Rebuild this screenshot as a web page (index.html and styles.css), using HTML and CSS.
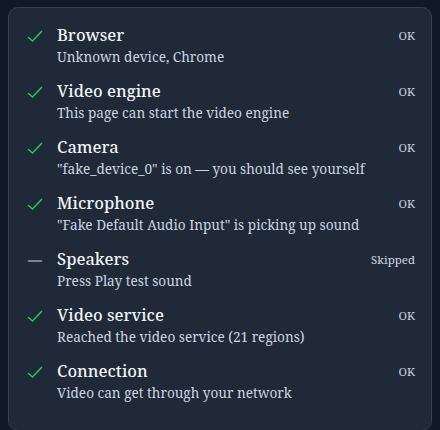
FILE: index.html
```html
<!DOCTYPE html>
<html lang="en">
<head>
    <meta charset="UTF-8">
    <meta name="viewport" content="width=device-width, initial-scale=1.0">
    <title>Device check</title>
    <link rel="stylesheet" href="styles.css">
</head>
<body>

    <div class="card">
        <div class="check">
            <svg class="icon ok" viewBox="0 0 16 16"><path d="M1.5 8.5 L5.5 12 L14.5 2.5"/></svg>
            <div class="info">
                <div class="name">Browser</div>
                <div class="detail">Unknown device, Chrome</div>
            </div>
            <div class="status">OK</div>
        </div>
        <div class="check">
            <svg class="icon ok" viewBox="0 0 16 16"><path d="M1.5 8.5 L5.5 12 L14.5 2.5"/></svg>
            <div class="info">
                <div class="name">Video engine</div>
                <div class="detail">This page can start the video engine</div>
            </div>
            <div class="status">OK</div>
        </div>
        <div class="check">
            <svg class="icon ok" viewBox="0 0 16 16"><path d="M1.5 8.5 L5.5 12 L14.5 2.5"/></svg>
            <div class="info">
                <div class="name">Camera</div>
                <div class="detail">"fake_device_0" is on — you should see yourself</div>
            </div>
            <div class="status">OK</div>
        </div>
        <div class="check">
            <svg class="icon ok" viewBox="0 0 16 16"><path d="M1.5 8.5 L5.5 12 L14.5 2.5"/></svg>
            <div class="info">
                <div class="name">Microphone</div>
                <div class="detail">"Fake Default Audio Input" is picking up sound</div>
            </div>
            <div class="status">OK</div>
        </div>
        <div class="check">
            <svg class="icon skip" viewBox="0 0 16 16"><path d="M1.5 8 L14.5 8"/></svg>
            <div class="info">
                <div class="name">Speakers</div>
                <div class="detail">Press Play test sound</div>
            </div>
            <div class="status">Skipped</div>
        </div>
        <div class="check">
            <svg class="icon ok" viewBox="0 0 16 16"><path d="M1.5 8.5 L5.5 12 L14.5 2.5"/></svg>
            <div class="info">
                <div class="name">Video service</div>
                <div class="detail">Reached the video service (21 regions)</div>
            </div>
            <div class="status">OK</div>
        </div>
        <div class="check">
            <svg class="icon ok" viewBox="0 0 16 16"><path d="M1.5 8.5 L5.5 12 L14.5 2.5"/></svg>
            <div class="info">
                <div class="name">Connection</div>
                <div class="detail">Video can get through your network</div>
            </div>
            <div class="status">OK</div>
        </div>
    </div>

</body>
</html>
```

FILE: styles.css
```css
body {
    font-family: "Noto Serif", "DejaVu Serif", serif;
    background-color: #111827;
    color: #f1f5f9;
    margin: 0;
    padding: 7px 8px;
}
.card {
    background: #1f2937;
    border: 1px solid #374151;
    border-radius: 10px;
    padding: 10px 16px 20px 18px;
}
.check {
    display: flex;
    align-items: flex-start;
    padding: 6px 0;
    height: 44px;
}
.icon {
    width: 16px;
    height: 16px;
    flex: none;
    margin: 5px 14px 0 0;
    fill: none;
    stroke-width: 1.6;
    stroke-linecap: round;
    stroke-linejoin: round;
}
.icon.ok {
    stroke: #22c55e;
}
.icon.skip {
    stroke: #94a3b8;
}
.info {
    flex: 1;
}
.name {
    font-size: 16.5px;
    line-height: 22px;
    font-weight: 500;
}
.detail {
    font-size: 13.6px;
    line-height: 22px;
    color: #cbd5e1;
}
.status {
    font-size: 11.5px;
    color: #cbd5e1;
    margin-top: 4px;
}
```
